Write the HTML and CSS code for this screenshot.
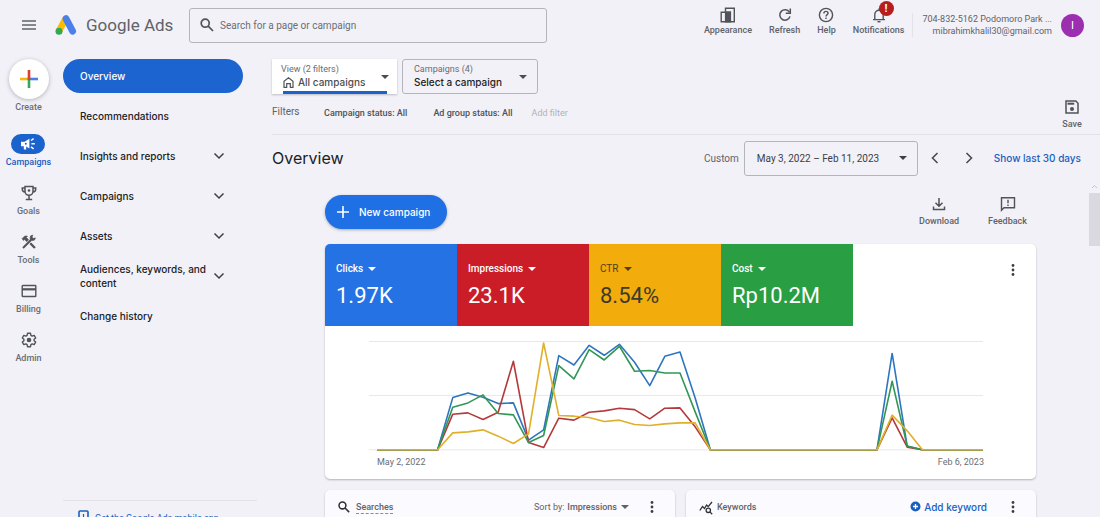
FILE: index.html
```html
<!DOCTYPE html>
<html lang="en">
<head>
<meta charset="utf-8">
<meta name="viewport" content="width=device-width, initial-scale=1">
<title>Overview - Google Ads</title>
<link rel="stylesheet" href="styles.css">
</head>
<body>
<div class="app">
  <header class="topbar">
    <button class="menu-btn" aria-label="Main menu">
      <svg width="14" height="10" viewBox="0 0 14 10"><path d="M0 1h14M0 5h14M0 9h14" stroke="#5f6368" stroke-width="1.5"/></svg>
    </button>
    <a class="brand" href="#">
      <svg width="22" height="20" viewBox="0 0 22 20"><path d="M4 16 10.2 4.2" stroke="#fbbc04" stroke-width="6.6"/><path d="M11 3.6 17.6 16.2" stroke="#4b7fea" stroke-width="6.8" stroke-linecap="round"/><circle cx="4" cy="16.2" r="3.5" fill="#34a853"/></svg>
      <span class="brand-name">Google Ads</span>
    </a>
    <label class="search">
      <svg width="14" height="14" viewBox="0 0 14 14" fill="none" stroke="#505357" stroke-width="1.7"><circle cx="5.2" cy="5.2" r="4"/><path d="m8.2 8.2 4.8 4.8"/></svg>
      <input type="search" placeholder="Search for a page or campaign" aria-label="Search for a page or campaign">
    </label>
    <div class="tools">
      <button class="icon-btn">
        <svg width="16" height="16" viewBox="0 0 16 16" fill="none" stroke="#505357" stroke-width="1.4"><path d="M5.5 4.5V1.2h8.800v13.600H1.200V5.200h4.300"/><path d="M5.600 5h4.800v9.800H5.600z" fill="#505357"/></svg>
        <span>Appearance</span>
      </button>
      <button class="icon-btn">
        <svg width="16" height="16" viewBox="0 0 16 16" fill="none" stroke="#505357" stroke-width="1.500"><path d="M12.400 5.200A5.200 5.200 0 1 0 13 9.400"/><path d="M13.300 1.600v4.600H8.800"/></svg>
        <span>Refresh</span>
      </button>
      <button class="icon-btn">
        <svg width="16" height="16" viewBox="0 0 16 16" fill="none" stroke="#505357" stroke-width="1.400"><circle cx="8" cy="8" r="6.600"/><path d="M5.900 6.400c0-1.200.9-2 2.100-2s2.100.8 2.100 1.900C10.100 7.700 8 7.700 8 9.500"/><path d="M8 10.600v1.400"/></svg>
        <span>Help</span>
      </button>
      <button class="icon-btn">
        <span class="bell">
          <svg width="16" height="16" viewBox="0 0 16 16" fill="none" stroke="#505357" stroke-width="1.400"><path d="M2 12.600h12M3.800 12.600V7.500a4.200 4.200 0 0 1 8.400 0v5.100M8 3.200V1.400"/><path d="M6.500 14.700h3"/></svg>
          <span class="alert">!</span>
        </span>
        <span>Notifications</span>
      </button>
    </div>
    <div class="account">
      <div class="account-text">
        <div>704-832-5162 Podomoro Park ...</div>
        <div>mibrahimkhalil30@gmail.com</div>
      </div>
      <button class="avatar" aria-label="Account">I</button>
    </div>
  </header>

  <div class="body">
    <nav class="rail" aria-label="Sections">
      <button class="create">
        <span class="create-disc"><svg width="18" height="18" viewBox="0 0 18 18" stroke-width="2.600"><path d="M0 9h9" stroke="#f5b912"/><path d="M9 9h9" stroke="#4b7fea"/><path d="M9 7.700V18" stroke="#34a853"/><path d="M9 0v10" stroke="#dd3c31"/></svg></span>
        <span>Create</span>
      </button>
      <a class="rail-item active" href="#">
        <span class="rail-icon"><svg width="16" height="14" viewBox="0 0 16 14"><path d="M1 4.800h3.600L9.400 1.700v9.800L6.200 9.400v3.200H3.800V9.300H1z" fill="#fff"/><circle cx="5.800" cy="6.700" r="1" fill="#1a62cc"/><path d="M11.400 6.700h3.400M11 3.500l2.600-1.900M11 9.900l2.600 1.900" stroke="#fff" stroke-width="1.500"/></svg></span>
        <span>Campaigns</span>
      </a>
      <a class="rail-item" href="#">
        <span class="rail-icon"><svg width="16" height="16" viewBox="0 0 16 16" fill="none" stroke="#505357" stroke-width="1.500"><path d="M4 1.500h8v4.800a4 4 0 0 1-8 0zM4 2.900H1.300v1.300A2.900 2.900 0 0 0 4 7M12 2.900h2.700v1.300A2.900 2.900 0 0 1 12 7M8 10v4.300M4.800 14.500h6.400"/><circle cx="8" cy="5.500" r="1.300" fill="#505357" stroke="none"/></svg></span>
        <span>Goals</span>
      </a>
      <a class="rail-item" href="#">
        <span class="rail-icon"><svg width="16" height="16" viewBox="0 0 16 16" fill="none" stroke="#505357"><path d="M2 14 10.200 5.800" stroke-width="2"/><path d="M14.300 3.900a2.600 2.600 0 1 1-2.500-2.700l-.9 1.900 1.500 1.500z" fill="#505357" stroke-width=".8"/><path d="m9.300 9.300 4.600 4.700" stroke-width="2.300"/><path d="m1 4.700 2.800-2.800 2.700.2L5.400 3.500l2.300 2.300-2 2-2.100-2.200L2.500 6.600z" fill="#505357" stroke-width=".5"/></svg></span>
        <span>Tools</span>
      </a>
      <a class="rail-item" href="#">
        <span class="rail-icon"><svg width="16" height="16" viewBox="0 0 16 16" fill="none" stroke="#505357"><rect x="1.200" y="2.500" width="13.600" height="11" rx=".6" stroke-width="1.400"/><path d="M1 6.300h14" stroke-width="2.200"/></svg></span>
        <span>Billing</span>
      </a>
      <a class="rail-item" href="#">
        <span class="rail-icon"><svg width="16" height="16" viewBox="0 0 16 16" fill="none" stroke="#505357" stroke-width="1.400" stroke-linejoin="round"><path d="M6.500 1.300h3l.4 2 1.300.8 2-.7 1.500 2.600-1.600 1.300v1.400l1.600 1.300-1.500 2.600-2-.7-1.300.8-.4 2h-3l-.4-2-1.300-.8-2 .7L1.300 10l1.600-1.300V7.300L1.300 6l1.500-2.600 2 .7 1.300-.8z"/><circle cx="8" cy="8" r="2.300" fill="#505357" stroke="none"/></svg></span>
        <span>Admin</span>
      </a>
    </nav>

    <nav class="sidenav" aria-label="Pages">
      <a class="nav-item selected" href="#">Overview</a>
      <a class="nav-item" href="#">Recommendations</a>
      <a class="nav-item" href="#">Insights and reports <svg class="chev" viewBox="0 0 12 8"><path d="m1.500 1.500 4.500 4.500 4.500-4.500"/></svg></a>
      <a class="nav-item" href="#">Campaigns <svg class="chev" viewBox="0 0 12 8"><path d="m1.500 1.500 4.500 4.500 4.500-4.500"/></svg></a>
      <a class="nav-item" href="#">Assets <svg class="chev" viewBox="0 0 12 8"><path d="m1.500 1.500 4.500 4.500 4.500-4.500"/></svg></a>
      <a class="nav-item" href="#">Audiences, keywords, and content <svg class="chev" viewBox="0 0 12 8"><path d="m1.500 1.500 4.500 4.500 4.500-4.500"/></svg></a>
      <a class="nav-item" href="#">Change history</a>
      <div class="nav-foot">
        <a href="#"><svg width="11" height="16" viewBox="0 0 11 16" fill="none" stroke="#1a5fc0"><rect x="1" y="1" width="9" height="14" rx="1" stroke-width="1.600"/><path d="M5.500 4v6M3.500 8l2 2 2-2" stroke-width="1.200"/></svg>Get the Google Ads mobile app</a>
      </div>
    </nav>

    <main class="main">
      <section class="scope">
        <div class="scope-left">
          <div class="pickers">
            <button class="picker view">
              <span class="picker-text">
                <span class="picker-label">View (2 filters)</span>
                <span class="picker-value muted"><svg width="11" height="11" viewBox="0 0 11 11" fill="none" stroke="#505357" stroke-width="1.200"><path d="M1 10.400V4.200L5.500.8 10 4.200v6.200H7.300V6.700H3.700v3.700z"/></svg>All campaigns</span>
              </span>
              <span class="caret"></span>
            </button>
            <button class="picker outlined">
              <span class="picker-text">
                <span class="picker-label">Campaigns (4)</span>
                <span class="picker-value">Select a campaign</span>
              </span>
              <span class="caret"></span>
            </button>
          </div>
          <div class="filters">
            <span class="filters-label">Filters</span>
            <button class="chip">Campaign status: All</button>
            <button class="chip arrow">Ad group status: All</button>
            <button class="add-filter">Add filter</button>
          </div>
        </div>
        <button class="icon-btn save">
          <svg width="16" height="16" viewBox="0 0 16 16" fill="none" stroke="#505357" stroke-width="1.500"><path d="M2 2h9.800L14 4.200V14H2z"/><path d="M3.500 4.700h6.700" stroke-width="2"/><circle cx="8" cy="9.900" r="2" fill="#505357" stroke="none"/></svg>
          <span>Save</span>
        </button>
      </section>

      <section class="title-row">
        <h1>Overview</h1>
        <span class="custom">Custom</span>
        <button class="date-btn">May 3, 2022 – Feb 11, 2023 <span class="caret"></span></button>
        <button class="step" aria-label="Previous period"><svg width="8" height="12" viewBox="0 0 8 12"><path d="M6.500 1 1.500 6l5 5"/></svg></button>
        <button class="step" aria-label="Next period"><svg width="8" height="12" viewBox="0 0 8 12"><path d="m1.500 1 5 5-5 5"/></svg></button>
        <a class="last-days" href="#">Show last 30 days</a>
      </section>

      <div class="scroller">
        <div class="content">
          <div class="actions">
            <button class="new-btn"><svg width="12" height="12" viewBox="0 0 12 12"><path d="M6 0v12M0 6h12" stroke="#fff" stroke-width="1.600"/></svg>New campaign</button>
            <div class="actions-right">
              <button class="icon-btn">
                <svg width="16" height="16" viewBox="0 0 16 16" fill="none" stroke="#505357" stroke-width="1.500"><path d="M8 2v8M4.500 6.700 8 10.200l3.500-3.500M2.500 10.500V13.500h11v-3"/></svg>
                <span>Download</span>
              </button>
              <button class="icon-btn">
                <svg width="16" height="16" viewBox="0 0 16 16" fill="none" stroke="#505357" stroke-width="1.400"><path d="M1.500 14.300V1.700h13v10.100H4z"/><path d="M8 3.700v3.500M8 8.500V10"/></svg>
                <span>Feedback</span>
              </button>
            </div>
          </div>

          <section class="card chart-card">
            <div class="scores">
              <button class="score blue"><span class="metric">Clicks <span class="caret"></span></span><span class="value">1.97K</span></button>
              <button class="score red"><span class="metric">Impressions <span class="caret"></span></span><span class="value">23.1K</span></button>
              <button class="score yellow"><span class="metric">CTR <span class="caret"></span></span><span class="value">8.54%</span></button>
              <button class="score green"><span class="metric">Cost <span class="caret"></span></span><span class="value">Rp10.2M</span></button>
              <button class="more" aria-label="More options"><svg width="4" height="12" viewBox="0 0 4 12"><circle cx="2" cy="1.500" r="1.400"/><circle cx="2" cy="6" r="1.400"/><circle cx="2" cy="10.500" r="1.400"/></svg></button>
            </div>
            <div class="chart">
              <svg class="plot" viewBox="369 340 616 112" role="img" aria-label="Clicks, impressions, CTR and cost over time">
                <path d="M369 341.500h615M369 395.500h615M369 450h615" stroke="#e6e7ea" stroke-width="1"/>
                <g id="lines" fill="none" stroke-width="1.600" stroke-linejoin="round"></g>
              </svg>
              <div class="axis"><span>May 2, 2022</span><span>Feb 6, 2023</span></div>
            </div>
          </section>

          <div class="pair">
            <section class="card small">
              <svg width="12" height="12" viewBox="0 0 14 14" fill="none" stroke="#303134" stroke-width="1.800"><circle cx="5.200" cy="5.200" r="4"/><path d="m8.200 8.200 4.800 4.800"/></svg>
              <h2 class="dashed">Searches</h2>
              <span class="sort">Sort by:</span>
              <button class="sort-btn">Impressions <span class="caret"></span></button>
              <button class="more" aria-label="More options"><svg width="4" height="12" viewBox="0 0 4 12"><circle cx="2" cy="1.500" r="1.400"/><circle cx="2" cy="6" r="1.400"/><circle cx="2" cy="10.500" r="1.400"/></svg></button>
            </section>
            <section class="card small">
              <svg width="14" height="14" viewBox="0 0 14 14" fill="none" stroke="#303134" stroke-width="1.300"><path d="m.8 9.500 2.700-4 2 2L7.600 4l1.600 1.600L13 1"/><circle cx="9.300" cy="9.300" r="2.200"/><path d="m10.900 10.900 2.300 2.300"/></svg>
              <h2 class="tight">Keywords</h2>
              <button class="add-kw"><svg width="11" height="11" viewBox="0 0 11 11"><circle cx="5.500" cy="5.500" r="5" fill="#1a5fc0"/><path d="M5.500 3v5M3 5.500h5" stroke="#fff" stroke-width="1.300"/></svg>Add keyword</button>
              <button class="more" aria-label="More options"><svg width="4" height="12" viewBox="0 0 4 12"><circle cx="2" cy="1.500" r="1.400"/><circle cx="2" cy="6" r="1.400"/><circle cx="2" cy="10.500" r="1.400"/></svg></button>
            </section>
          </div>
        </div>
        <div class="scrollbar" aria-hidden="true">
          <svg width="7" height="5" viewBox="0 0 7 5"><path d="m1 4 2.500-2.500L6 4" fill="none" stroke="#c4c5ca"/></svg>
          <div class="thumb"></div>
        </div>
      </div>
    </main>
  </div>
</div>
<script src="chart.js"></script>
</body>
</html>
```

FILE: styles.css
```css
* { box-sizing: border-box; }
body {
  margin: 0;
  background: #f2f1f8;
  color: #202124;
  font-family: Roboto, "Liberation Sans", sans-serif;
  font-size: 10px;
}
button {
  margin: 0;
  padding: 0;
  border: 0;
  background: none;
  color: inherit;
  font: inherit;
  cursor: pointer;
}
a { color: inherit; text-decoration: none; }
svg { flex: none; display: block; }
h1, h2 { margin: 0; font-weight: 400; }

.app { height: 100vh; overflow: hidden; display: flex; flex-direction: column; }

/* Top bar */
.topbar { flex: none; height: 50px; display: flex; align-items: center; padding-right: 16px; }
.menu-btn { width: 14px; height: 24px; margin-left: 22px; display: flex; align-items: center; }
.brand { display: flex; align-items: center; gap: 9px; margin-left: 19px; width: 134px; }
.brand-name { font-family: Roboto, sans-serif; font-size: 17px; color: #5f6368; white-space: nowrap; }
.search {
  flex: 0 1 358px;
  height: 35px;
  display: flex;
  align-items: center;
  gap: 6px;
  padding: 0 10px;
  border: 1px solid #b4b5bb;
  border-radius: 3px;
}
.search input { flex: 1; min-width: 0; border: 0; outline: 0; padding: 0; background: none; font: 10px Roboto, sans-serif; color: #3c4043; }
.search input::placeholder { color: #6b6e73; opacity: 1; }
.tools { margin-left: auto; display: flex; gap: 17px; padding-right: 8px; height: 36px; }
.icon-btn {
  display: flex;
  flex-direction: column;
  align-items: center;
  gap: 3px;
  font-size: 9px;
  line-height: 12px;
  font-weight: 500;
  color: #5f6368;
}
.tools .icon-btn { justify-content: flex-start; gap: 1px; }
.bell { position: relative; }
.alert {
  position: absolute;
  top: -6px;
  left: 8px;
  width: 15px;
  height: 15px;
  border-radius: 50%;
  background: #b81d1d;
  color: #fff;
  font-size: 11px;
  line-height: 15px;
  font-weight: 700;
}
.account { display: flex; align-items: center; gap: 9px; padding-left: 9px; border-left: 1px solid #e2e2e8; height: 24px; }
.account-text { text-align: right; font-size: 9px; line-height: 12px; color: #5f6368; white-space: nowrap; }
.avatar { width: 23px; height: 23px; border-radius: 50%; background: #9c2fb0; color: #fff; font-size: 11px; }

/* Left rail */
.body { flex: 1; min-height: 0; display: flex; }
.rail { flex: none; width: 57px; display: flex; flex-direction: column; align-items: center; padding-top: 9px; font-size: 9px; line-height: 12px; font-weight: 500; color: #6a6d72; }
.create { display: flex; flex-direction: column; align-items: center; gap: 2px; margin-bottom: 21px; }
.create-disc { width: 40px; height: 40px; border-radius: 50%; background: #fff; display: grid; place-items: center; box-shadow: 0 1px 4px rgba(60, 64, 67, .35); }
.rail-item { height: 49px; display: flex; flex-direction: column; align-items: center; gap: 2px; }
.rail-icon { width: 34px; height: 20px; border-radius: 10px; display: grid; place-items: center; }
.rail-item.active { color: #1a5fc0; }
.active .rail-icon { background: #1a62cc; }

/* Page navigation */
.sidenav { flex: none; width: 215px; padding: 9px 22px 0 6px; display: flex; flex-direction: column; gap: 6px; }
.nav-item {
  flex: none;
  width: 180px;
  height: 34px;
  padding: 0 18px 0 17px;
  display: flex;
  align-items: center;
  justify-content: space-between;
  border-radius: 17px;
  font: 500 10px/14px Inter, sans-serif;
}
.nav-item.selected { background: #1c64d0; color: #fff; }
.chev { width: 12px; height: 8px; fill: none; stroke: #3c4043; stroke-width: 1.5; }
.nav-foot { margin-top: 161px; width: 194px; border-top: 1px solid #e1e1e7; padding: 9px 15px; }
.nav-foot a { display: flex; align-items: center; gap: 6px; color: #1a5fc0; font-size: 9px; white-space: nowrap; }

/* Scope and filters */
.main { flex: 1; min-width: 0; display: flex; flex-direction: column; }
.scope { flex: none; display: flex; align-items: flex-end; justify-content: space-between; padding: 9px 17px 4px 0; border-bottom: 1px solid #e1e1e7; }
.pickers { display: flex; gap: 5px; }
.picker { height: 35px; display: flex; align-items: center; justify-content: space-between; padding: 0 10px 0 11px; text-align: left; }
.picker.view { position: relative; width: 125px; padding: 0 8px 0 9px; background: #fff; box-shadow: 0 1px 2px rgba(60, 64, 67, .3); }
.picker.view::after { content: ""; position: absolute; left: 11px; right: 10px; bottom: 0; height: 3px; background: #1a62cc; }
.picker.outlined { width: 136px; border: 1px solid #b4b5bb; border-radius: 3px; }
.picker-text { display: flex; flex-direction: column; }
.picker-label { font-size: 9px; line-height: 11px; color: #6a6d72; }
.picker-value { display: flex; align-items: center; gap: 4px; font: 500 10px/14px Inter, sans-serif; white-space: nowrap; }
.picker-value.muted { color: #4a4d51; padding-left: 2px; }
.caret { flex: none; display: inline-block; border: 4px solid transparent; border-top-color: currentColor; border-bottom: 0; }
.picker .caret { color: #4a4d51; }
.filters { display: flex; align-items: center; height: 24px; margin: 7px 0 5px; color: #5f6368; font-size: 9px; }
.filters-label { width: 52px; padding-bottom: 4px; font-size: 10px; }
.chip { font-weight: 500; color: #4f5256; margin-right: 26px; }
.chip.arrow { margin-right: 19px; }
.add-filter { color: #b0b1b7; }
.save { width: 22px; }

/* Title row */
.title-row { flex: none; height: 46px; display: flex; align-items: center; padding-right: 19px; color: #5f6368; }
h1 { flex: 1; font: 400 16px/24px Inter, sans-serif; color: #202124; }
.custom { font-size: 10px; margin-right: 5px; }
.date-btn { width: 174px; height: 35px; border: 1px solid #b4b5bb; border-radius: 3px; padding: 0 10px 0 12px; display: flex; align-items: center; justify-content: space-between; font-size: 10px; color: #3c4043; }
.step { width: 34px; height: 34px; display: grid; place-items: center; fill: none; stroke: #4a4d51; stroke-width: 1.6; }
.last-days { margin-left: 8px; font: 500 10px/14px Inter, sans-serif; color: #1a5fc0; }

/* Scrolling content */
.scroller { flex: 1; min-height: 0; display: flex; }
.content { flex: 1; min-width: 0; padding: 14px 53px 0; }
.scrollbar { flex: none; width: 11px; display: flex; flex-direction: column; align-items: center; gap: 4px; padding-top: 3px; }
.thumb { width: 11px; height: 53px; background: #d9d9df; }
.actions { display: flex; justify-content: space-between; }
.new-btn { height: 34px; padding: 0 17px 0 12px; display: flex; align-items: center; gap: 10px; border-radius: 17px; background: #1f6fe5; color: #fff; font: 500 10px/14px Inter, sans-serif; box-shadow: 0 1px 3px rgba(60, 64, 67, .4); }
.actions-right { display: flex; gap: 29px; padding: 1px 9px 0 0; }
.actions-right .icon-btn { height: 32px; }
.card { background: #fff; border-radius: 5px; box-shadow: 0 1px 2px rgba(60, 64, 67, .35); overflow: hidden; }
.chart-card { margin-top: 15px; }
.scores { display: flex; align-items: flex-start; }
.score { width: 132px; height: 82px; padding: 1px 11px 0; text-align: left; color: #fff; display: flex; flex-direction: column; justify-content: center; gap: 6px; }
.metric { display: flex; align-items: center; gap: 5px; font-size: 10px; line-height: 14px; font-weight: 500; }
.value { font-size: 22px; line-height: 28px; }
.blue { background: #2472e4; }
.red { background: #ca1d27; }
.yellow { background: #f2ac0b; color: #4f4118; }
.yellow .metric { font-weight: 400; }
.yellow .value { color: #3c3a2c; }
.green { background: #299e42; }
.more { width: 20px; height: 20px; display: grid; place-items: center; fill: #3c4043; }
.scores .more { margin: 16px 13px 0 auto; }
.chart { padding: 14px 52px 10px 44px; }
.plot { width: 100%; height: auto; }
.axis { display: flex; justify-content: space-between; padding-left: 8px; font-size: 9px; line-height: 14px; margin-top: 3px; color: #6a6d72; }
.pair { display: grid; grid-template-columns: 1fr 1fr; gap: 11px; margin-top: 11px; }
.small { height: 120px; display: flex; align-items: flex-start; padding: 7px 13px; background: #fbfaff; }
.small > svg { margin-top: 4px; }
.small h2 { margin: 4px auto 0 6px; font-size: 9px; line-height: 12px; color: #5f6368; font-weight: 500; }
.small .tight { margin-left: 4px; }
.small .dashed { border-bottom: 1px dashed #8a8d92; }
.sort { font-size: 9px; line-height: 20px; color: #5f6368; margin-right: 3px; }
.sort-btn { display: flex; align-items: center; gap: 4px; height: 20px; font-size: 9px; font-weight: 500; color: #5f6368; margin-right: 13px; }
.add-kw { display: flex; align-items: center; gap: 3px; height: 20px; font: 500 10px/14px Inter, sans-serif; color: #1a5fc0; margin-right: 16px; }
```

FILE: chart.js
```js
const BASE = 450;
const zeros = (n) => Array(n).fill(BASE);

/* One y value per week, from May 2, 2022 to Feb 6, 2023 */
const series = [
  { color: "#2e75c0", active: [397.7, 393, 397.3, 403.7, 403, 440.3, 430, 355.7, 365, 345.3, 355.3, 344.3, 362.3, 385.7, 356.3, 352, 398], tail: [353.5, 446.5] },
  { color: "#b5393c", active: [414.3, 413, 419.7, 412.3, 361.3, 442.7, 447.7, 418.3, 420.3, 412.3, 411, 408.3, 409.7, 419, 408.3, 408, 427], tail: [418, 447.3] },
  { color: "#329655", active: [407.3, 403, 395, 413.7, 415, 442.7, 435.7, 365.7, 379, 349.7, 360, 346.3, 371.3, 370.5, 373, 373, 412], tail: [381.3, 446.3] },
  { color: "#e0b02a", active: [433, 432, 430, 436.3, 443.7, 434, 343, 415.7, 416.3, 417.7, 421.7, 420.3, 424.7, 425.7, 424, 423, 423], tail: [415.3, 431] }
];

const group = document.getElementById("lines");
for (const s of series) {
  const ys = [...zeros(5), ...s.active, ...zeros(12), ...s.tail, ...zeros(5)];
  const step = (984 - 377) / (ys.length - 1);
  const line = document.createElementNS("http://www.w3.org/2000/svg", "polyline");
  line.setAttribute("points", ys.map((y, i) => `${(377 + i * step).toFixed(1)},${y}`).join(" "));
  line.setAttribute("stroke", s.color);
  group.appendChild(line);
}
```
